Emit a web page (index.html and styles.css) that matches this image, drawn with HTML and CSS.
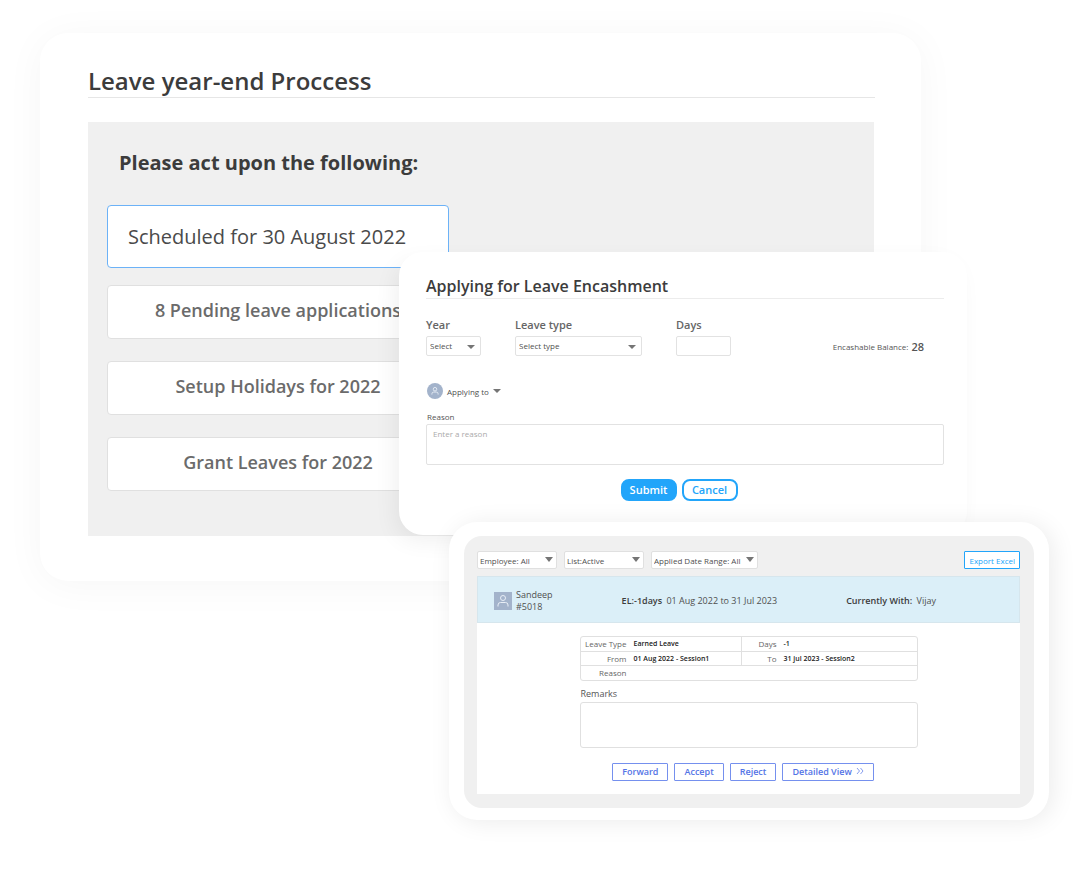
FILE: index.html
```html
<!DOCTYPE html>
<html lang="en">
<head>
<meta charset="utf-8">
<meta name="viewport" content="width=device-width, initial-scale=1">
<title>Leave year-end process</title>
<link rel="stylesheet" href="styles.css">
</head>
<body>
<main class="stage">
  <section class="card process">
    <h1 class="process-title">Leave year-end Proccess</h1>
    <div class="process-panel">
      <h2 class="process-heading">Please act upon the following:</h2>
      <div class="actions">
        <button type="button" class="action action-scheduled">Scheduled for 30 August 2022</button>
        <button type="button" class="action">8 Pending leave applications</button>
        <button type="button" class="action">Setup Holidays for 2022</button>
        <button type="button" class="action">Grant Leaves for 2022</button>
      </div>
    </div>
  </section>

  <form class="card encash">
    <h2 class="encash-title">Applying for Leave Encashment</h2>
    <div class="encash-row">
      <div class="field field-small">
        <label for="year">Year</label>
        <span class="picker"><select id="year"><option>Select</option></select></span>
      </div>
      <div class="field field-wide">
        <label for="leave-type">Leave type</label>
        <span class="picker"><select id="leave-type"><option>Select type</option></select></span>
      </div>
      <div class="field field-small">
        <label for="days">Days</label>
        <input id="days" type="text">
      </div>
      <p class="balance">Encashable Balance: <strong>28</strong></p>
    </div>
    <button type="button" class="applying-to">
      <svg class="avatar avatar-round" viewBox="0 0 18 18" aria-hidden="true"><rect width="18" height="18" /><circle cx="9" cy="7" r="2" /><path d="M5.5 13v-.8q0-2 2-2h3q2 0 2 2v.8" /></svg>
      <span>Applying to</span>
      <span class="caret"></span>
    </button>
    <label class="reason-label" for="reason">Reason</label>
    <textarea class="reason-box" id="reason" placeholder="Enter a reason"></textarea>
    <div class="encash-buttons">
      <button type="button" class="pill pill-solid">Submit</button>
      <button type="button" class="pill">Cancel</button>
    </div>
  </form>

  <section class="card review">
    <div class="review-frame">
      <div class="filters">
        <span class="picker picker-flat"><select aria-label="Employee"><option>Employee: All</option></select></span>
        <span class="picker picker-flat"><select aria-label="List"><option>List:Active</option></select></span>
        <span class="picker picker-flat picker-range"><select aria-label="Applied date range"><option>Applied Date Range: All</option></select></span>
        <button type="button" class="export">Export Excel</button>
      </div>
      <div class="request">
        <div class="request-head">
          <div class="person">
            <svg class="avatar" viewBox="0 0 18 18" aria-hidden="true"><rect width="18" height="18" /><circle cx="9" cy="6" r="2.5" /><path d="M4 14.500v-1.500q0-2.500 2.500-2.500h5q2.500 0 2.500 2.500v1.500" /></svg>
            <p>Sandeep<br>#5018</p>
          </div>
          <p class="period"><b>EL:-1days</b> <span>01 Aug 2022 to 31 Jul 2023</span></p>
          <p class="holder"><b>Currently With:</b> <span>Vijay</span></p>
        </div>
        <div class="request-body">
          <div class="details-wrap">
            <table class="details">
              <tr><th class="c1">Leave Type</th><td class="c2">Earned Leave</td><th class="c3">Days</th><td>-1</td></tr>
              <tr><th>From</th><td class="c2">01 Aug 2022 - Session1</td><th>To</th><td>31 jul 2023 - Session2</td></tr>
              <tr><th>Reason</th><td colspan="3"></td></tr>
            </table>
          </div>
          <label class="remarks-label" for="remarks">Remarks</label>
          <textarea class="remarks-box" id="remarks"></textarea>
          <div class="request-buttons">
            <button type="button" class="outline">Forward</button>
            <button type="button" class="outline">Accept</button>
            <button type="button" class="outline">Reject</button>
            <button type="button" class="outline">Detailed View
              <svg class="chevrons" viewBox="0 0 8 8" aria-hidden="true"><path d="M1 1l2.500 3L1 7M4.500 1L7 4 4.500 7" /></svg>
            </button>
          </div>
        </div>
      </div>
    </div>
  </section>
</main>
</body>
</html>
```

FILE: styles.css
```css
* { box-sizing: border-box; }

body {
  margin: 0;
  background: #fff;
  color: #3c3c3c;
  font-family: "Open Sans", "Noto Sans", sans-serif;
}

h1, h2, p { margin: 0; }

button, select, input, textarea {
  margin: 0;
  font-family: inherit;
  color: inherit;
}

button { cursor: pointer; }

textarea { display: block; width: 100%; resize: none; }

/* The three cards overlap: the first sets the flow, the others lie over it. */
.stage {
  position: relative;
  min-height: 873px;
  padding: 33px 168px 0 40px;
}

.card { background: #fff; }

/* Year-end process */
.process {
  padding: 32px 46px 45px 48px;
  border-radius: 28px;
  box-shadow: 0 4px 40px rgba(0, 0, 0, 0.04);
}

.process-title {
  border-bottom: 1px solid #e6e6e6;
  font-size: 24px;
  font-weight: 600;
  line-height: 32px;
}

.process-panel {
  margin: 24px 1px 0 0;
  padding: 27px 19px 45px;
  background: #f0f0f0;
}

.process-heading {
  padding-left: 12px;
  font-size: 20px;
  font-weight: 700;
  line-height: 28px;
}

.actions {
  display: grid;
  gap: 22px;
  width: 342px;
  margin-top: 28px;
}

.action {
  height: 54px;
  padding: 0 0 4px;
  border: 1px solid #e0e0e0;
  border-radius: 4px;
  background: #fff;
  color: #6b6b6b;
  font-size: 18px;
  font-weight: 600;
}

.action-scheduled {
  height: 63px;
  margin-bottom: -5px;
  padding: 0 20px;
  border-color: #6cb2f7;
  color: #4a4a4a;
  font-size: 20px;
  font-weight: 400;
  text-align: left;
}

/* Encashment form */
.encash {
  position: absolute;
  top: 252px;
  left: 399px;
  right: 122px;
  padding: 23px 23px 34px 27px;
  border-radius: 24px;
  box-shadow: -6px 8px 24px -4px rgba(0, 0, 0, 0.07);
}

.encash-title {
  padding-bottom: 1px;
  border-bottom: 1px solid #ececec;
  font-size: 16px;
  font-weight: 600;
  line-height: 22px;
}

.encash-row {
  display: flex;
  align-items: flex-end;
  gap: 34px;
  margin-top: 19px;
}

.field { display: grid; gap: 4px; }
.field-small { width: 55px; }
.field-wide { width: 127px; }

.field label {
  color: #666;
  font-size: 11px;
  font-weight: 600;
  line-height: 14px;
}

.field input {
  width: 100%;
  height: 20px;
  border: 1px solid #e2e2e2;
  border-radius: 2px;
  background: #fff;
  font-size: 8px;
}

.picker { position: relative; display: block; color: #4f4f4f; }

.picker select {
  display: block;
  width: 100%;
  height: 20px;
  padding: 0 3px 1px;
  border: 1px solid #e2e2e2;
  border-radius: 2px;
  background: #fff;
  font-size: 8px;
  appearance: none;
}

.picker::after, .caret {
  border: 4px solid transparent;
  border-top-color: #757575;
  border-bottom: 0;
}

.picker::after {
  content: "";
  position: absolute;
  top: 9px;
  right: 6px;
  pointer-events: none;
}

.balance {
  display: flex;
  align-items: center;
  gap: 3px;
  height: 20px;
  margin-left: auto;
  padding-right: 20px;
  color: #555;
  font-size: 8px;
}

.balance strong { font-size: 11px; font-weight: 600; }

.applying-to {
  display: flex;
  align-items: center;
  gap: 4px;
  margin-top: 27px;
  padding: 0 1px;
  border: 0;
  background: none;
  color: #4f4f4f;
  font-size: 8px;
}

.avatar { width: 18px; height: 18px; fill: none; stroke: #e8eef6; }
.avatar rect { fill: #a3b3cb; stroke: none; }
.avatar-round { width: 16px; height: 16px; border-radius: 50%; }

.reason-label {
  display: block;
  margin-top: 11px;
  padding: 0 0 1px 1px;
  color: #555;
  font-size: 8px;
  line-height: 13px;
}

.reason-box {
  height: 41px;
  padding: 3px 6px;
  border: 1px solid #e2e2e2;
  border-radius: 2px;
  font-size: 8px;
}

.reason-box::placeholder { color: #aaa; }

.encash-buttons {
  display: flex;
  justify-content: center;
  gap: 5px;
  margin-top: 14px;
  padding-right: 12px;
}

.pill {
  width: 56px;
  height: 22px;
  padding: 0;
  border: 2px solid #22a5fa;
  border-radius: 8px;
  background: #fff;
  color: #22a5fa;
  font-size: 11px;
  font-weight: 600;
  line-height: 16px;
}

.pill-solid { background: #22a5fa; color: #fff; }

/* Request review */
.review {
  position: absolute;
  top: 522px;
  left: 449px;
  right: 40px;
  padding: 14px 15px 12px;
  border-radius: 28px;
  box-shadow: 4px 2px 24px rgba(0, 0, 0, 0.08);
}

.review-frame {
  padding: 15px 14px 14px 13px;
  border-radius: 18px;
  background: #f0f0f0;
}

.filters { display: flex; gap: 7px; }

.picker-flat { width: 80px; }
.picker-range { width: 107px; }

.picker-flat select {
  height: 18px;
  padding: 0 2px;
  border-color: #e0e0e0;
}

.picker-flat::after {
  top: 6px;
  right: 4px;
  border-width: 5px 4px 0;
}

.export {
  height: 18px;
  margin-left: auto;
  padding: 0 4px;
  border: 1px solid #22a5fa;
  border-radius: 1px;
  background: #fff;
  color: #22a5fa;
  font-size: 8px;
}

.request { margin-top: 7px; background: #fff; }

.request-head {
  display: flex;
  align-items: center;
  justify-content: space-between;
  height: 47px;
  padding: 2px 83px 0 16px;
  border: 1px solid #d6e6ed;
  background: #dbeff8;
  color: #4f4f4f;
  font-size: 9px;
}

.request-head b { margin-right: 2px; color: #3c3c3c; font-weight: 600; }

.person { display: flex; align-items: center; gap: 4px; line-height: 12px; }

.request-body { width: 338px; margin: 0 auto; padding: 13px 0; }

.details-wrap {
  border: 1px solid #e0e0e0;
  border-radius: 3px;
}

.details {
  width: 100%;
  border-collapse: collapse;
  table-layout: fixed;
  color: #222;
  font-size: 8px;
  line-height: 13px;
}

.details th, .details td {
  height: 14px;
  padding: 0;
  text-align: left;
}

.details td { font-size: 7px; font-weight: 600; }
.details th { padding-right: 7px; color: #666; font-weight: 400; text-align: right; }
.details tr + tr { border-top: 1px solid #e0e0e0; }
.details tr:last-child th { padding-bottom: 1px; }
.details .c1 { width: 53px; }
.details .c2 { width: 108px; border-right: 1px solid #e0e0e0; }
.details .c3 { width: 42px; }

.remarks-label {
  display: block;
  margin-top: 6px;
  padding-left: 1px;
  color: #555;
  font-size: 9px;
  line-height: 14px;
}

.remarks-box {
  height: 46px;
  margin-top: 1px;
  border: 1px solid #e0e0e0;
  border-radius: 3px;
  font-size: 9px;
}

.request-buttons {
  display: flex;
  justify-content: center;
  gap: 6px;
  margin-top: 15px;
  padding-right: 11px;
}

.outline {
  display: flex;
  align-items: center;
  gap: 4px;
  height: 18px;
  padding: 0 9px 1px;
  border: 1px solid #7590ee;
  border-radius: 1px;
  background: #fff;
  color: #5474e6;
  font-size: 9px;
  font-weight: 600;
}

.chevrons { width: 8px; height: 8px; fill: none; stroke: #5474e6; stroke-width: 0.7; }
```
